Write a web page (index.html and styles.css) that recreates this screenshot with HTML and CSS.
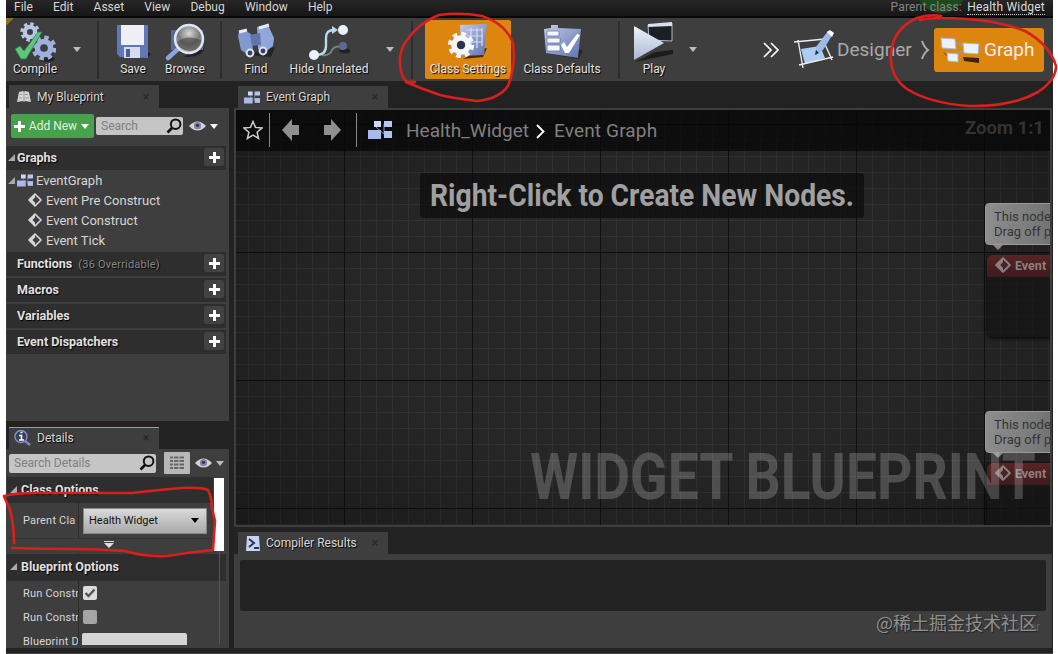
FILE: index.html
```html
<!DOCTYPE html>
<html lang="en">
<head>
    <meta charset="UTF-8">
    <meta name="viewport" content="width=device-width, initial-scale=1.0">
    <title>Health Widget</title>
    <link rel="stylesheet" href="styles.css">
</head>
<body>
    <svg class="defs" width="0" height="0">
        <defs>
            <linearGradient id="blue" x1="0" y1="0" x2="1" y2="1">
                <stop offset="0" stop-color="#c3cdea"/>
                <stop offset="1" stop-color="#5f71ae"/>
            </linearGradient>
            <linearGradient id="play" x1="0" y1="0" x2="0" y2="1">
                <stop offset="0" stop-color="#eef2f8"/>
                <stop offset="1" stop-color="#a9b9d4"/>
            </linearGradient>
            <radialGradient id="lens" cx=".5" cy=".3" r=".7">
                <stop offset="0" stop-color="#d8d8d8"/>
                <stop offset=".55" stop-color="#777"/>
                <stop offset="1" stop-color="#bbb"/>
            </radialGradient>
            <g id="gear">
                <circle r="6" fill="none" stroke="currentColor" stroke-width="5"/>
                <circle r="9.3" fill="none" stroke="currentColor" stroke-width="4" stroke-dasharray="3.9 3.4"/>
            </g>
            <symbol id="graph-icon" viewBox="0 0 24 18">
                <path d="M8 6L17 14M16 3v10" stroke="#7f8cb5" stroke-width="1"/>
                <rect x="6" y="0" width="7" height="6" fill="#cfd8f5"/>
                <rect x="16" y="0" width="8" height="6" fill="#b9c6ef"/>
                <rect x="0" y="9" width="13" height="9" fill="#a9b9ee"/>
                <rect x="16" y="10" width="8" height="7" fill="#b4c2ef"/>
            </symbol>
            <symbol id="event-icon" viewBox="0 0 14 14">
                <path d="M7 1L13 7L7 13L1 7Z" fill="none" stroke="currentColor" stroke-width="1.7" stroke-linejoin="round"/>
                <path d="M7 1L1 7L7 13V9.5L4.5 7L7 4.5Z" fill="currentColor"/>
            </symbol>
            <symbol id="search-icon" viewBox="0 0 16 16">
                <circle cx="9.6" cy="6.2" r="4.8" fill="none" stroke="#111" stroke-width="2"/>
                <path d="M6 10L1.5 14.5" stroke="#111" stroke-width="2.6"/>
            </symbol>
            <symbol id="eye-icon" viewBox="0 0 17 10">
                <path d="M0 5Q8.5 -4 17 5Q8.5 14 0 5Z" fill="#d4d4d4"/>
                <circle cx="8.5" cy="4.7" r="3.6" fill="#8086a5"/>
                <circle cx="8.5" cy="4.3" r="1.6" fill="#33364d"/>
            </symbol>
        </defs>
    </svg>

    <div class="app">
        <nav class="menu">
            <span>File</span><span>Edit</span><span>Asset</span><span>View</span><span>Debug</span><span>Window</span><span>Help</span>
            <div class="parent">Parent class: <a>Health Widget</a></div>
        </nav>

        <header class="toolbar">
            <div class="tool compile">
                <svg width="42" height="41" viewBox="0 0 42 41">
                    <ellipse cx="33" cy="38" rx="8" ry="3" fill="#252525"/>
                    <use href="#gear" color="#b8c6e8" transform="translate(16 11) scale(.86)"/>
                    <use href="#gear" color="#9fb0da" transform="translate(30 27) scale(1.1)"/>
                    <path d="M1 28L6 25L10 30L24 11L28 11L12 38L7 38Z" fill="#5fc47c" stroke="#2f7f48" stroke-width=".8"/>
                </svg>
                <span>Compile</span>
            </div>
            <i class="caret compile-caret"></i>
            <div class="sep"></div>
            <div class="tool save">
                <svg width="42" height="41" viewBox="0 0 42 41">
                    <path d="M6 36H36L39 33L34 30Z" fill="#1f1f1f"/>
                    <path d="M5 4H36V37L8 36L5 33Z" fill="#6277b6"/>
                    <path d="M9 4H32V24H9Z" fill="#eef0f5"/>
                    <path d="M12 26H28V37H12Z" fill="#d8dded"/>
                    <path d="M14 28H18V36H14Z" fill="#4a5f9e"/>
                </svg>
                <span>Save</span>
            </div>
            <div class="tool browse">
                <svg width="42" height="41" viewBox="0 0 42 41">
                    <path d="M20 36Q38 36 40 28L36 24Z" fill="#232323"/>
                    <rect x="7" y="9" width="32" height="20" fill="#596793"/>
                    <path d="M14 28L4 37" stroke="#8ea4d8" stroke-width="4.5" stroke-linecap="round"/>
                    <circle cx="25" cy="18" r="14" fill="url(#lens)" stroke="#dfe6f6" stroke-width="2.4"/>
                    <path d="M13 21Q23 13 37 19Q36 30 25 30Q15 29 13 21Z" fill="#444" opacity=".6"/>
                </svg>
                <span>Browse</span>
            </div>
            <div class="sep find-sep"></div>
            <div class="tool find">
                <svg width="42" height="41" viewBox="0 0 42 41">
                    <path d="M12 34L36 36L40 26Z" fill="#242424"/>
                    <path d="M3 15Q3 10 9 9L16 13L18 29L12 33L6 29Z" fill="#8299cf"/>
                    <path d="M22 6L33 4L39 17L38 25L29 32L23 28Z" fill="#91a6da"/>
                    <path d="M15 14L25 12L26 24L17 25Z" fill="#6175a9"/>
                    <path d="M4 11L12 9M24 7L34 4" stroke="#e7ecfa" stroke-width="3"/>
                    <circle cx="15" cy="32" r="3.4" fill="#39415f" stroke="#dbe2f4" stroke-width="2"/>
                    <circle cx="28" cy="30" r="3.4" fill="#39415f" stroke="#dbe2f4" stroke-width="2"/>
                </svg>
                <span>Find</span>
            </div>
            <div class="tool hide">
                <svg width="42" height="41" viewBox="0 0 42 41">
                    <path d="M14 34Q22 35 24 29Q27 24 34 26" fill="none" stroke="#74808a" stroke-width="2"/>
                    <ellipse cx="37" cy="30" rx="6" ry="2.5" fill="#222"/>
                    <circle cx="35" cy="25" r="4" fill="#5b6996"/>
                    <path d="M8 34Q18 34 18 25V17Q18 9 26 9" fill="none" stroke="#b7dceb" stroke-width="2.4"/>
                    <path d="M24 5L30 9L24 13Z" fill="#b7dceb"/>
                    <circle cx="35" cy="9" r="5" fill="#e9f1fb"/>
                    <circle cx="6" cy="34" r="5" fill="#e9f1fb"/>
                </svg>
                <span>Hide Unrelated</span>
            </div>
            <i class="caret hide-caret"></i>
            <div class="sep"></div>
            <div class="tool settings">
                <svg width="42" height="41" viewBox="0 0 42 41">
                    <path d="M16 38L36 36L40 27L34 28Z" fill="#4b2d05"/>
                    <path d="M13 4L40 3L37 34L14 35Z" fill="url(#blue)"/>
                    <path d="M20 9H36M20 15H36M20 21H35M24 7V27M30 7V27M35 7V25" stroke="#d5ddf2" stroke-width="1.2"/>
                    <use href="#gear" color="#f7f7fa" transform="translate(14 24) scale(1.16)"/>
                    <circle cx="14" cy="24" r="4.2" fill="#2c3350"/>
                </svg>
                <span>Class Settings</span>
            </div>
            <div class="tool defaults">
                <svg width="42" height="41" viewBox="0 0 42 41">
                    <path d="M10 33L37 38L42 30L38 28Z" fill="#232323"/>
                    <path d="M3 8L10 7V4H17V7L40 8L37 37L5 32Z" fill="url(#blue)"/>
                    <path d="M6 10H18V15H6ZM6 17H19V22H6ZM6 24H19V30H6Z" fill="#f5f6fa" stroke="#5d6b9b" stroke-width=".7"/>
                    <path d="M20 24L23 21L26 26L36 13L39 14L28 32H24Z" fill="#fff"/>
                </svg>
                <span>Class Defaults</span>
            </div>
            <div class="sep"></div>
            <div class="tool play">
                <svg width="42" height="41" viewBox="0 0 42 41">
                    <path d="M2 41L22 31L40 29V33Z" fill="#1c1c1c"/>
                    <path d="M15 4L39 2V20L16 19Z" fill="#1c1f25" stroke="#aebbd0" stroke-width="1"/>
                    <path d="M15 3L39 1V5L15 6Z" fill="#d7dfee"/>
                    <path d="M1 5L31 22L1 39Z" fill="url(#play)"/>
                </svg>
                <span>Play</span>
            </div>
            <i class="caret play-caret"></i>
            <svg class="more" width="16" height="16" viewBox="0 0 16 16"><path d="M1 1L8 8L1 15M8 1L15 8L8 15" fill="none" stroke="#fff" stroke-width="1.7"/></svg>
            <div class="mode designer">
                <svg width="40" height="40" viewBox="0 0 40 40">
                    <path d="M7 19L26 16L31 28L11 34Z" fill="#aecbf2"/>
                    <path d="M0 12L31 9M4 10L9 38M5 35L39 27M30 12L38 30" stroke="#eee" stroke-width="1.4"/>
                    <path d="M21 25L22 17L34 1L39 4L29 20Z" fill="#9cb9e8"/>
                    <path d="M33 2L36 0L40 3L38 7Z" fill="#fff"/>
                    <path d="M21 25L25 23L22 20Z" fill="#202a40"/>
                </svg>
                Designer
            </div>
            <svg class="mode-arrow" width="9" height="20" viewBox="0 0 9 20"><path d="M1 1Q3 7 7 10Q3 13 1 19" fill="none" stroke="#aaa" stroke-width="2"/></svg>
            <div class="mode graph-mode">
                <svg width="40" height="28" viewBox="0 0 40 28">
                    <path d="M16 7L26 10M15 19L24 14" stroke="#999" stroke-width="1.5"/>
                    <path d="M3 16L8 21L6 18ZM23 21L39 22V27L24 25Z" fill="#3d2509"/>
                    <path d="M1 2L15 3L16 13L2 12Z" fill="#edf1f8" stroke="#a6b8da"/>
                    <path d="M23 7L39 8L38 18L24 17Z" fill="#edf1f8" stroke="#a6b8da"/>
                    <path d="M7 17L18 18V26L8 25Z" fill="#edf1f8" stroke="#a6b8da"/>
                </svg>
                Graph
            </div>
        </header>

        <main class="workspace">
            <aside class="left">
                <section class="blueprint">
                    <div class="tab">
                        <svg width="14" height="14" viewBox="0 0 14 14"><path d="M2 2L6 1L7 2L8 1L12 2L14 12L8 11L7 12L6 11L0 12Z" fill="#d4d4d4"/><path d="M3 4.500H5M8 4.500H11M2 8H5M8 8H12M7 2V11" stroke="#999"/></svg>
                        My Blueprint<b>×</b>
                    </div>
                    <div class="panel">
                        <div class="filter">
                            <button class="add"><i class="plus"></i>Add New<i class="caret white"></i></button>
                            <div class="search">Search<svg width="16" height="16"><use href="#search-icon"/></svg></div>
                            <svg class="eye" width="17" height="10"><use href="#eye-icon"/></svg>
                            <i class="caret white"></i>
                        </div>
                        <div class="category graphs"><i class="expand"></i>Graphs<button><i class="plus"></i></button></div>
                        <div class="tree">
                            <div class="root"><i class="expand"></i><svg width="16" height="13"><use href="#graph-icon"/></svg>EventGraph</div>
                            <div><svg width="14" height="14"><use href="#event-icon"/></svg>Event Pre Construct</div>
                            <div><svg width="14" height="14"><use href="#event-icon"/></svg>Event Construct</div>
                            <div><svg width="14" height="14"><use href="#event-icon"/></svg>Event Tick</div>
                        </div>
                        <div class="category">Functions<small>(36 Overridable)</small><button><i class="plus"></i></button></div>
                        <div class="category">Macros<button><i class="plus"></i></button></div>
                        <div class="category">Variables<button><i class="plus"></i></button></div>
                        <div class="category">Event Dispatchers<button><i class="plus"></i></button></div>
                    </div>
                </section>

                <section class="details">
                    <div class="tab active">
                        <svg width="17" height="16" viewBox="0 0 17 16"><circle cx="7" cy="6.5" r="6" fill="#39405f" stroke="#8592c4" stroke-width="1.4"/><path d="M11 11L16 15" stroke="#7988c4" stroke-width="2.4"/><path d="M5 5.5H7.5V10M5 10H10M6.5 2.5H8.5" stroke="#fff" stroke-width="1.6" fill="none"/></svg>
                        Details<b>×</b>
                    </div>
                    <div class="panel">
                        <div class="filter">
                            <div class="search">Search Details<svg width="16" height="16"><use href="#search-icon"/></svg></div>
                            <button class="matrix"><svg width="14" height="14" viewBox="0 0 14 14"><path d="M0 1.5H14M0 5H14M0 8.5H14M0 12H14" stroke="#666" stroke-width="2.2" stroke-dasharray="3 1 4.5 1 4.5 0"/></svg></button>
                            <svg class="eye" width="17" height="10"><use href="#eye-icon"/></svg>
                            <i class="caret"></i>
                        </div>
                        <div class="properties">
                            <div class="group"><i class="expand"></i>Class Options</div>
                            <div class="prop parent-class"><label>Parent Cla</label><div class="combo">Health Widget<i class="caret"></i></div></div>
                            <div class="advanced"><i class="caret white"></i></div>
                            <div class="group second"><i class="expand"></i>Blueprint Options</div>
                            <div class="prop"><label>Run Constr</label><span class="check on"><svg width="12" height="12" viewBox="0 0 12 12"><path d="M1.5 6L4.5 9L10.5 2.5" fill="none" stroke="#555" stroke-width="2.4"/></svg></span></div>
                            <div class="prop"><label>Run Constr</label><span class="check"></span></div>
                            <div class="prop"><label>Blueprint D</label><span class="field"></span></div>
                            <div class="scroll"></div>
                        </div>
                    </div>
                </section>
            </aside>

            <div class="right">
                <section class="event-graph">
                    <div class="tab">
                        <svg width="16" height="13"><use href="#graph-icon"/></svg>
                        Event Graph<b>×</b>
                    </div>
                    <div class="canvas">
                        <div class="node first">
                            <p>This node<br>Drag off p</p>
                            <div class="body"><h4><svg width="16" height="16"><use href="#event-icon"/></svg>Event</h4></div>
                        </div>
                        <div class="node last">
                            <p>This node<br>Drag off p</p>
                            <div class="body"><h4><svg width="16" height="16"><use href="#event-icon"/></svg>Event</h4></div>
                        </div>
                        <div class="crumbs">
                            <svg class="star" width="20" height="20" viewBox="0 0 20 20"><path d="M10 1.5L12.5 7.4L19 8L14.1 12.2L15.6 18.5L10 15.1L4.4 18.5L5.9 12.2L1 8L7.5 7.4Z" fill="none" stroke="#ccc" stroke-width="1.5"/></svg>
                            <div class="line"></div>
                            <svg class="back" width="17" height="22" viewBox="0 0 17 22"><path d="M0 11L10 0V6H17V16H10V22Z" fill="#8f8f8f"/></svg>
                            <svg class="forward" width="17" height="22" viewBox="0 0 17 22"><path d="M17 11L7 0V6H0V16H7V22Z" fill="#8f8f8f"/></svg>
                            <div class="line"></div>
                            <svg class="graph-logo" width="24" height="18"><use href="#graph-icon"/></svg>
                            <span class="asset">Health_Widget</span>
                            <svg class="chevron" width="9" height="15" viewBox="0 0 9 15"><path d="M1 1L7.5 7.5L1 14" fill="none" stroke="#fff" stroke-width="1.8"/></svg>
                            <span class="page">Event Graph</span>
                            <span class="zoom">Zoom 1:1</span>
                        </div>
                        <div class="hint">
                            <svg width="444" height="45"><text x="10" y="33" textLength="424" lengthAdjust="spacingAndGlyphs">Right-Click to Create New Nodes.</text></svg>
                        </div>
                        <svg class="mark" width="514" height="60"><text x="1" y="50" textLength="506" lengthAdjust="spacingAndGlyphs">WIDGET BLUEPRINT</text></svg>
                    </div>
                </section>

                <section class="compiler">
                    <div class="tab">
                        <svg width="14" height="15" viewBox="0 0 14 15"><path d="M1 0H13L14 15H0Z" fill="#c6d3f1"/><path d="M3 3L8 7L3 11M8 12H13" fill="none" stroke="#27355e" stroke-width="2"/></svg>
                        Compiler Results<b>×</b>
                    </div>
                    <div class="panel">
                        <div class="log"></div>
                        <span class="clear">Clear</span>
                    </div>
                </section>
            </div>
        </main>
    </div>

    <div class="watermark">@稀土掘金技术社区</div>

    <svg class="marker" width="1058" height="654" viewBox="0 0 1058 654">
        <path d="M415 82L407 82Q403 79 401 71Q397 53 407 40Q420 22 439 15Q460 12 482 16Q506 24 513 43Q516 66 508 86Q499 99 477 101Q452 98 440 95Q422 89 406 82"/>
        <path d="M941 16Q929 14 917 18Q894 28 891 52Q889 76 907 89Q929 103 969 106Q1012 107 1038 92Q1056 80 1056 66Q1050 45 1025 31Q992 18 941 18Q929 18 920 20"/>
        <path d="M14 543Q14 522 9 507Q5 499 4 496Q14 493 38 493Q88 493 132 493Q157 490 181 488Q202 487 208 490Q212 498 212 508L215 521Q214 535 213 550Q191 552 167 556Q145 557 125 551Q98 549 70 549Q40 549 12 548"/>
    </svg>
</body>
</html>
```
FILE: styles.css
```css
* {
    box-sizing: border-box;
}
body {
    margin: 0;
    height: 654px;
    overflow: hidden;
    position: relative;
    background: #fff;
    color: #d6d6d6;
    font-family: Roboto, "Liberation Sans", sans-serif;
    font-size: 12px;
}
svg {
    display: block;
    flex: none;
}
.defs {
    position: absolute;
}
button {
    border: 0;
    padding: 0;
    font-family: inherit;
}
.app {
    margin-left: 6px;
    width: 1047px;
    height: 654px;
    background: #222;
    border-bottom: 1px solid #444;
    display: flex;
    flex-direction: column;
}

/* menu and toolbar */
.menu {
    height: 18px;
    flex: none;
    display: flex;
    gap: 20.2px;
    padding: 0 8px;
    line-height: 14px;
    background: radial-gradient(circle at 935px -12px, #1d4a1d 24px, transparent 26px), linear-gradient(#262626, #181818 14px);
    border-bottom: 2px solid #090909;
}
.parent {
    margin-left: auto;
    color: #858585;
    letter-spacing: 0.2px;
}
.parent a {
    color: #ddd;
    margin-left: 2px;
    display: inline-block;
    height: 15px;
    line-height: 15px;
    border-bottom: 1px dotted #ccc;
}
.toolbar {
    height: 63px;
    flex: none;
    display: flex;
    align-items: center;
    background: #3e3e3e;
    background-image: linear-gradient(135deg, #8d7617 5px, transparent 6px);
}
.tool {
    height: 58px;
    display: flex;
    flex-direction: column;
    align-items: center;
    white-space: nowrap;
    color: #e2e2e2;
    text-shadow: 1px 1px 1px #000;
    flex: none;
}
.tool span {
    line-height: 14px;
}
.compile { width: 58px; }
.save { width: 52px; margin-left: 8px; }
.browse { width: 52px; }
.find-sep { margin-left: 9px; }
.find { width: 58px; margin-left: 5px; }
.hide { width: 88px; }
.settings {
    width: 86px;
    height: 59px;
    margin-left: 12px;
    padding-top: 1px;
    margin-bottom: 1px;
    background: #dd860f;
    border-radius: 2px;
}
.defaults { width: 102px; }
.play { width: 60px; margin-left: 4px; }
.sep {
    width: 2px;
    height: 58px;
    flex: none;
    background: #2d2d2d;
}
.caret {
    width: 0;
    height: 0;
    flex: none;
    border: 4px solid transparent;
    border-top: 5px solid #bbb;
    border-bottom: 0;
}
.caret.white {
    border-top-color: #fff;
}
.compile-caret { margin: 0 16px 0 9px; }
.hide-caret { margin: 0 17px 0 13px; }
.defaults + .sep { margin-left: 5px; }
.play-caret { margin-left: 5px; }
.more { margin-left: 66px; }
.mode {
    display: flex;
    align-items: center;
    color: #aaa;
    font-size: 19px;
    flex: none;
}
.designer {
    width: 120px;
    margin-left: 15px;
    gap: 3px;
}
.mode-arrow {
    margin: 0 4px 0 7px;
}
.graph-mode {
    width: 110px;
    height: 44px;
    padding-left: 6px;
    gap: 4px;
    background: #dd860f;
    border-radius: 3px;
    color: #eee;
}

/* tabs and panels */
.workspace {
    display: flex;
    gap: 5px;
    height: 567px;
    padding-top: 4px;
}
.left {
    width: 223px;
    flex: none;
}
.right {
    width: 818px;
}
.tab {
    width: 150px;
    height: 23px;
    margin-left: 3px;
    padding: 0 10px 0 8px;
    display: flex;
    align-items: center;
    gap: 6px;
    background: #3e3e3e;
    text-shadow: 1px 1px 1px #000;
}
.tab b {
    margin-left: auto;
    color: #2a2a2a;
    text-shadow: none;
}
.panel {
    background: #3e3e3e;
}
.blueprint .panel {
    height: 313px;
    padding: 6px 3px 0 1px;
}
.filter {
    display: flex;
    align-items: center;
}
.blueprint .filter {
    height: 24px;
    margin: 0 0 8px 4px;
}
.add {
    width: 83px;
    height: 24px;
    display: flex;
    align-items: center;
    justify-content: space-between;
    padding: 0 5px 0 3px;
    margin-right: 2px;
    color: #dff3df;
    background: #46a24c;
    border-radius: 2px;
    font-size: 12px;
}
.plus {
    width: 11px;
    height: 11px;
    background: linear-gradient(#fff, #fff) center / 11px 3px no-repeat, linear-gradient(#fff, #fff) center / 3px 11px no-repeat;
}
.search {
    width: 87px;
    height: 18px;
    display: flex;
    align-items: center;
    justify-content: space-between;
    padding: 0 1px 0 5px;
    color: #808080;
    background: #c5c5c5;
    border-radius: 2px;
}
.eye {
    margin: 0 4px 0 6px;
}
.category {
    height: 24px;
    margin-bottom: 2px;
    padding: 0 2px 2px 10px;
    display: flex;
    align-items: center;
    background: #2e2e2e;
    color: #e0e0e0;
    font-weight: bold;
    font-size: 12.5px;
    text-shadow: 1px 1px 1px #000;
}
.category small {
    margin: 2px 0 0 6px;
    color: #888;
    font-size: 11px;
    font-weight: normal;
    letter-spacing: 0.2px;
}
.category button {
    width: 20px;
    height: 18px;
    margin-left: auto;
    display: flex;
    align-items: center;
    justify-content: center;
    background: #424242;
    border-radius: 2px;
}
.expand {
    width: 0;
    height: 0;
    flex: none;
    border-left: 7px solid transparent;
    border-bottom: 7px solid #aaa;
}
.category.graphs {
    margin-bottom: 0;
    padding-left: 1px;
    gap: 2px;
}
.tree {
    font-size: 13px;
    height: 82px;
}
.tree div {
    height: 20px;
    display: flex;
    align-items: center;
    gap: 4px;
    padding-left: 21px;
}
.tree .root {
    padding-left: 1px;
    gap: 3px;
}
.tree .root svg {
    margin-left: -1px;
}

/* details */
.details {
    margin-top: 6px;
}
.tab.active {
    height: 22px;
    border-top: 1px solid #c0a51c;
    padding: 0 10px 2px 5px;
    gap: 6px;
}
.details .panel {
    height: 199px;
    overflow: hidden;
    padding: 3px 0 0 1px;
}
.details .filter {
    height: 22px;
    padding-left: 2px;
}
.details .search {
    width: 147px;
    height: 19px;
}
.matrix {
    width: 26px;
    height: 22px;
    margin: 0 -1px 0 8px;
    display: flex;
    align-items: center;
    justify-content: center;
    background: #b8b8b8;
    border-radius: 1px;
}
.properties {
    position: relative;
    width: 219px;
    height: 168px;
    margin-top: 3px;
    overflow: hidden;
    background: linear-gradient(#2b2b2b, #2b2b2b) 71px 0 / 1px 100% no-repeat;
}
.group {
    width: 206px;
    height: 26px;
    display: flex;
    align-items: center;
    gap: 4px;
    padding: 0 0 2px 3px;
    color: #e0e0e0;
    font-weight: bold;
    font-size: 12.5px;
    background: #2e2e2e;
    text-shadow: 1px 1px 1px #000;
}
.group.second {
    width: 219px;
    height: 27px;
    margin-top: 1px;
}
.prop {
    height: 24px;
    display: flex;
    align-items: center;
    padding-left: 16px;
    font-size: 11px;
}
.prop label {
    width: 55px;
    overflow: hidden;
    white-space: nowrap;
    margin-right: 5px;
    letter-spacing: 0.2px;
}
.parent-class {
    height: 35px;
}
.combo {
    width: 124px;
    height: 26px;
    display: flex;
    align-items: center;
    justify-content: space-between;
    padding: 0 7px 0 5px;
    background: linear-gradient(#dadada, #a9a9a9);
    border: 1px solid #888;
    color: #111;
}
.combo .caret {
    border-top-color: #000;
}
.advanced {
    width: 204px;
    height: 15px;
    display: flex;
    justify-content: center;
    padding-top: 2px;
    background: #3e3e3e;
    border-top: 1px solid #333;
}
.advanced .caret {
    width: 10px;
    height: 7px;
    border: 0;
    background: #ddd;
    clip-path: polygon(0 0, 100% 0, 100% 15%, 0 15%, 0 30%, 100% 30%, 50% 100%, 0 30%);
}
.check {
    width: 14px;
    height: 14px;
    padding: 1px;
    background: #a5a5a5;
    border-radius: 2px;
}
.check.on {
    background: #ddd;
}
.field {
    width: 105px;
    height: 16px;
    margin-left: -1px;
    background: #d5d5d5;
    border-radius: 2px;
}
.scroll {
    position: absolute;
    right: 2px;
    top: 1px;
    width: 10px;
    height: 166px;
    background: linear-gradient(#fff, #fff) 0 0 / 10px 73px no-repeat, linear-gradient(#555, #555) 5px 0 / 1px 100% no-repeat;
}

/* graph editor */
.event-graph .tab {
    margin-left: 4px;
    margin-top: 1px;
    height: 22px;
    padding-left: 6px;
}
.canvas {
    position: relative;
    height: 419px;
    overflow: hidden;
    border: 2px solid #3e3e3e;
    background-color: #262626;
    background-image:
        radial-gradient(ellipse at center, transparent 50%, rgba(0, 0, 0, 0.35)),
        linear-gradient(90deg, #111 1px, transparent 1px),
        linear-gradient(#0e0e0e 1px, transparent 1px),
        linear-gradient(90deg, #323232 1px, transparent 1px),
        linear-gradient(#323232 1px, transparent 1px);
    background-size: auto, 128px 128px, 128px 128px, 16px 16px, 16px 16px;
    background-position: 0 0, 108px 14px, 108px 14px, 12px 14px, 12px 14px;
}
.crumbs {
    position: relative;
    height: 41px;
    display: flex;
    align-items: center;
    padding-bottom: 1px;
    background: rgba(8, 8, 8, 0.78);
    color: #808080;
    font-size: 19px;
}
.star { margin: 0 6px 0 7px; }
.line {
    width: 1px;
    height: 34px;
    background: #888;
}
.back { margin-left: 12px; }
.forward { margin: 0 15px 0 25px; }
.graph-logo { margin: 0 14px 0 11px; }
.chevron { margin: 2px 9px 0 7px; }
.page { letter-spacing: 0.15px; }
.zoom {
    margin: -4px 6px 0 auto;
    color: #333;
    font-size: 18.5px;
    font-weight: bold;
}
.hint {
    position: absolute;
    left: 184px;
    top: 63px;
    background: rgba(12, 12, 12, 0.7);
    border-radius: 3px;
}
.hint text {
    font-size: 32px;
    font-weight: bold;
    fill: #a0a0a0;
}
.mark {
    position: absolute;
    left: 293px;
    top: 339px;
}
.mark text {
    font-size: 64px;
    font-weight: bold;
    fill: rgba(255, 255, 255, 0.2);
}
.node {
    position: absolute;
    left: 749px;
    width: 150px;
}
.node.first { top: 93px; }
.node.last { top: 301px; }
.node p {
    position: relative;
    height: 42px;
    margin: 0 0 10px;
    padding: 5px 8px;
    line-height: 15px;
    font-size: 13px;
    white-space: nowrap;
    color: #353535;
    background: linear-gradient(90deg, #8d8d8d, #737373 65px);
    border: 1px solid #999;
    border-radius: 4px;
}
.node p::after {
    content: "";
    position: absolute;
    left: 7px;
    top: 41px;
    border: 5px solid transparent;
    border-top-color: #888;
    border-bottom: 0;
}
.node .body {
    height: 82px;
    margin-left: 2px;
    background: rgba(20, 20, 20, 0.75);
    border-radius: 6px;
    box-shadow: 0 1px 4px #000;
}
.node h4 {
    display: flex;
    align-items: center;
    gap: 4px;
    height: 22px;
    margin: 0;
    padding: 0 0 2px 8px;
    font-size: 12.5px;
    color: #8a8080;
    background: linear-gradient(#582426, #3e1a1c);
    border-radius: 6px 6px 0 0;
}

/* compiler output */
.compiler {
    margin-top: 5px;
}
.compiler .tab {
    height: 22px;
    margin-left: 4px;
}
.compiler .panel {
    height: 94px;
    padding: 6px;
}
.log {
    height: 51px;
    background: #222;
    border-radius: 2px;
}
.clear {
    display: block;
    margin: 9px 6px 0 0;
    text-align: right;
    font-size: 12px;
    color: #606060;
}
.watermark {
    position: absolute;
    left: 876px;
    top: 609px;
    font-family: "Noto Sans CJK SC", sans-serif;
    font-size: 18px;
    line-height: 26px;
    color: #909090;
    text-shadow: 1px 1px 1px #222;
    white-space: nowrap;
}

/* red pen */
.marker {
    position: absolute;
    left: 0;
    top: 0;
    fill: none;
    stroke: #d8201c;
    stroke-width: 2.6;
    stroke-linecap: round;
    stroke-linejoin: round;
}
```
